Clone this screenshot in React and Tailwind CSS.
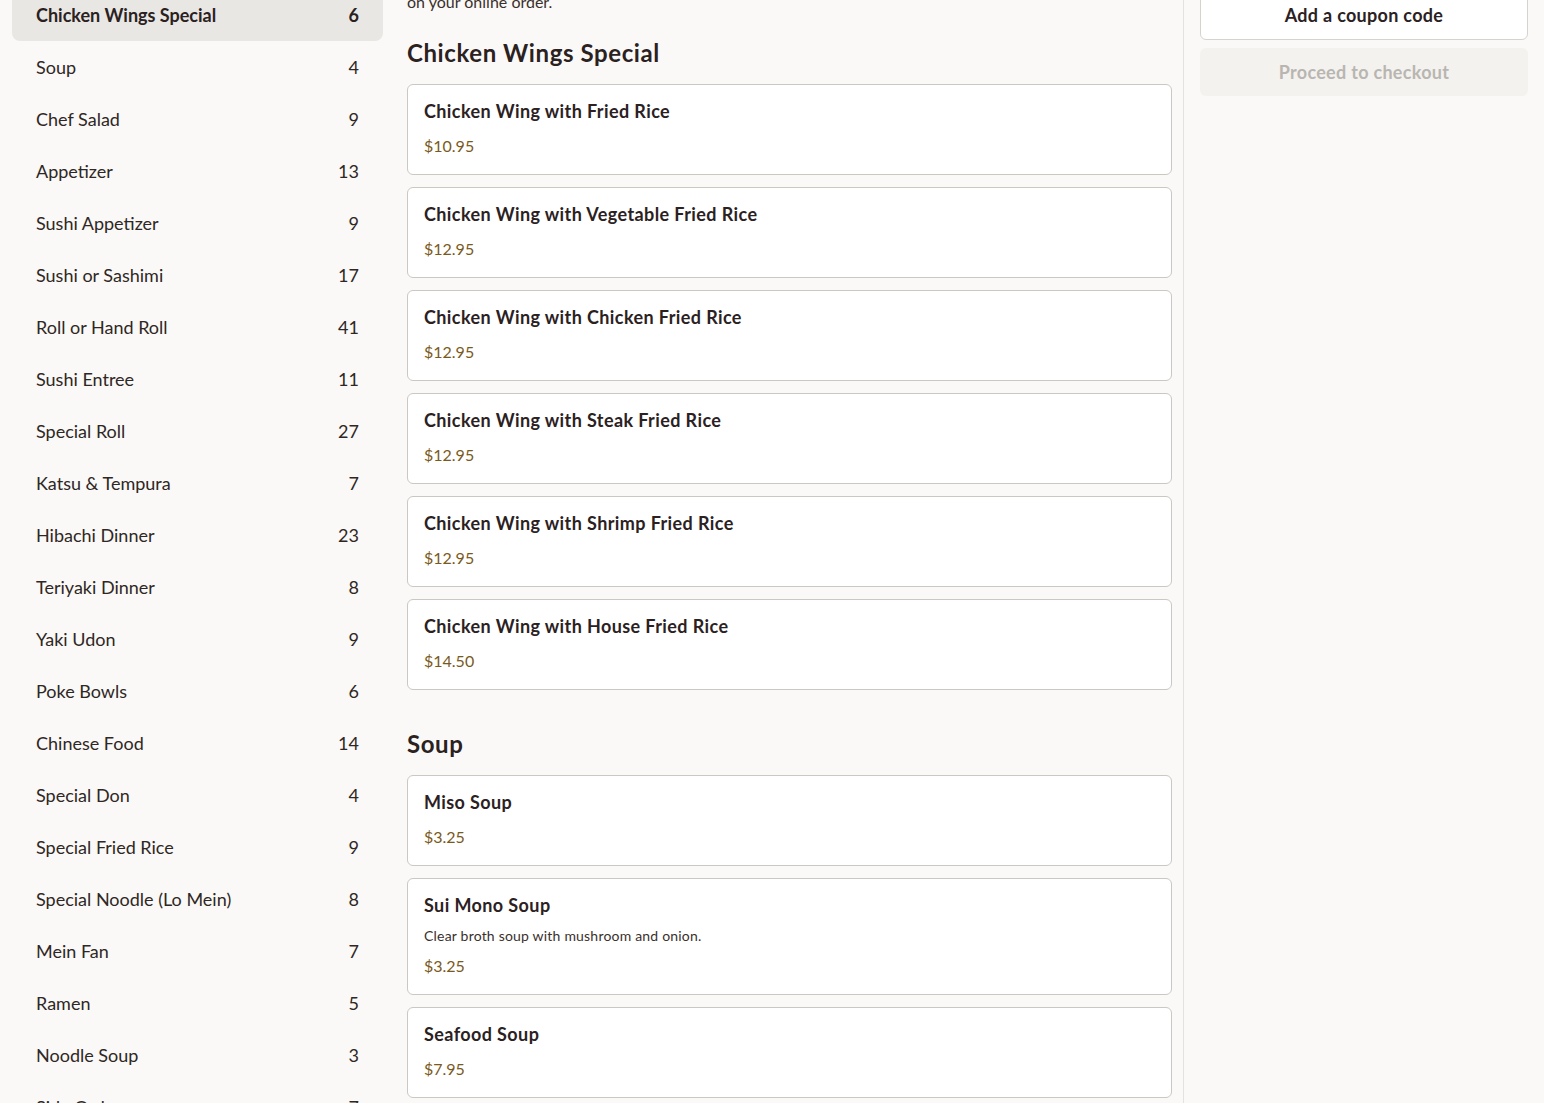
import React from 'react';

const categories = [
  ['Chicken Wings Special', 6],
  ['Soup', 4],
  ['Chef Salad', 9],
  ['Appetizer', 13],
  ['Sushi Appetizer', 9],
  ['Sushi or Sashimi', 17],
  ['Roll or Hand Roll', 41],
  ['Sushi Entree', 11],
  ['Special Roll', 27],
  ['Katsu & Tempura', 7],
  ['Hibachi Dinner', 23],
  ['Teriyaki Dinner', 8],
  ['Yaki Udon', 9],
  ['Poke Bowls', 6],
  ['Chinese Food', 14],
  ['Special Don', 4],
  ['Special Fried Rice', 9],
  ['Special Noodle (Lo Mein)', 8],
  ['Mein Fan', 7],
  ['Ramen', 5],
  ['Noodle Soup', 3],
  ['Side Order', 7],
];

const sections = [
  {
    title: 'Chicken Wings Special',
    items: [
      { name: 'Chicken Wing with Fried Rice', price: '$10.95' },
      { name: 'Chicken Wing with Vegetable Fried Rice', price: '$12.95' },
      { name: 'Chicken Wing with Chicken Fried Rice', price: '$12.95' },
      { name: 'Chicken Wing with Steak Fried Rice', price: '$12.95' },
      { name: 'Chicken Wing with Shrimp Fried Rice', price: '$12.95' },
      { name: 'Chicken Wing with House Fried Rice', price: '$14.50' },
    ],
  },
  {
    title: 'Soup',
    items: [
      { name: 'Miso Soup', price: '$3.25' },
      { name: 'Sui Mono Soup', desc: 'Clear broth soup with mushroom and onion.', price: '$3.25' },
      { name: 'Seafood Soup', price: '$7.95' },
      { name: 'Hot & Sour Soup', price: '$3.95' },
    ],
  },
];

function MenuCard({ item }) {
  return (
    <div className="bg-white border border-[#cbc8c3] rounded-[6px] px-4 pt-[15px] pb-4">
      <div className="text-[18px] leading-[22px] font-bold tracking-[0.4px] text-[#2b211f]">{item.name}</div>
      {item.desc && (
        <div className="mt-[10px] text-[14px] leading-[20px] tracking-[0.2px] text-[#3a302c]">{item.desc}</div>
      )}
      <div className={`${item.desc ? 'mt-2' : 'mt-3'} text-[16px] leading-[24px] text-[#7a5a1c]`}>
        {item.price}
      </div>
    </div>
  );
}

export default function App() {
  return (
    <div
      className="bg-[#faf9f7] text-[#2b211f] overflow-hidden h-[1103px]"
      style={{ fontFamily: 'Lato, "Noto Sans", sans-serif' }}
    >
      <div className="flex pl-3 pr-4">
        {/* category sidebar */}
        <aside className="w-[371px] shrink-0 -mt-[11px]">
          {categories.map(([name, count], i) => (
            <div
              key={name}
              className={`h-[52px] flex items-center justify-between px-6 text-[18px] rounded-lg ${
                i === 0 ? 'bg-[#e8e7e4] font-bold' : 'text-[#2f2724]'
              }`}
            >
              <span>{name}</span>
              <span>{count}</span>
            </div>
          ))}
        </aside>

        {/* menu */}
        <main className="w-[765px] shrink-0 ml-6 -mt-[10px]">
          <p className="text-[16px] leading-[24px] text-[#3a302c]">on your online order.</p>
          <div className="flex flex-col gap-[38px] mt-[23px]">
            {sections.map((s) => (
              <section key={s.title}>
                <h2 className="text-[24px] leading-[32px] font-bold tracking-[0.6px] text-[#2b211f]">{s.title}</h2>
                <div className="flex flex-col gap-3 mt-[15px]">
                  {s.items.map((it) => (
                    <MenuCard key={it.name} item={it} />
                  ))}
                </div>
              </section>
            ))}
          </div>
        </main>

        <div className="w-px bg-[#e4e2de] ml-[11px] shrink-0 self-stretch min-h-[1103px]" />

        {/* cart */}
        <aside className="w-[328px] shrink-0 ml-4 -mt-[9px] flex flex-col gap-2">
          <button className="h-[49px] w-full bg-white border border-[#d6d3cf] rounded-[6px] text-[18px] font-bold tracking-[0.3px] text-[#2b211f]">
            Add a coupon code
          </button>
          <button className="h-[48px] w-full bg-[#f3f2ef] rounded-[6px] text-[18px] font-bold tracking-[0.3px] text-[#b9b6b1]">
            Proceed to checkout
          </button>
        </aside>
      </div>
    </div>
  );
}
